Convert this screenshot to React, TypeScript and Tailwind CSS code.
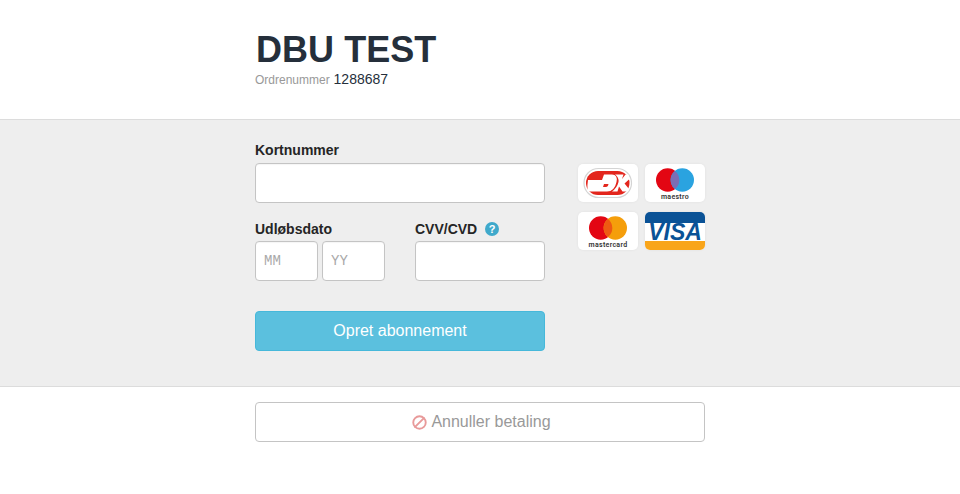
import React from 'react';
import { Ban } from 'lucide-react';

const fieldClass =
  'block h-10 border border-[#c4c4c4] rounded-[4px] bg-white outline-none shadow-[inset_0_1px_1px_rgba(0,0,0,0.04)]';

const CardBox: React.FC<{ children: React.ReactNode }> = ({ children }) => (
  <div className="w-[60px] h-[38px] bg-white rounded-[5px] overflow-hidden shadow-[0_0_3px_rgba(0,0,0,0.06)] flex flex-col items-center">
    {children}
  </div>
);

const DkLogo = () => (
  <CardBox>
    <svg width="60" height="38" viewBox="0 0 60 38">
      <rect x="6" y="4.500" width="47.500" height="29" rx="14.500" fill="#fff" stroke="#d4d4d4" strokeWidth="1.200" />
      <rect x="8" y="7" width="43.500" height="24" rx="12" fill="#e3261d" />
      <path
        fillRule="evenodd"
        d="M10 16H24L26 10.500H34Q40 10.500 38.500 18Q36.500 27.500 29 27.500H9.500Q9 21 10 16ZM26 20L25 23H28Q30 23 30.500 20Z"
        fill="#fff"
      />
      <path d="M37 10.500H45.500L44 15L47.500 10.500H50.500L51.500 15L46.500 19.500L51 25L50 27.500H44.500L41 22.500L39.500 27.500H34Q39 24 40.500 18Q41 13 37 10.500Z" fill="#fff" />
    </svg>
  </CardBox>
);

const MaestroLogo = () => (
  <CardBox>
    <svg width="60" height="26" viewBox="0 0 60 26" className="mt-[4px] shrink-0">
      <circle cx="22.700" cy="12" r="11.700" fill="#e30613" />
      <circle cx="37.300" cy="12" r="11.700" fill="#2aa3e0" />
      <path d="M30 2.900a11.700 11.700 0 0 1 0 18.200a11.700 11.700 0 0 1 0-18.200z" fill="#7b6db5" />
    </svg>
    <span className="text-[7px] leading-[6px] font-semibold text-[#333] font-['Roboto',sans-serif] tracking-[0.3px]">maestro</span>
  </CardBox>
);

const MastercardLogo = () => (
  <CardBox>
    <svg width="60" height="26" viewBox="0 0 60 26" className="mt-[4px] shrink-0">
      <circle cx="22.700" cy="12" r="11.700" fill="#e30613" />
      <circle cx="37.300" cy="12" r="11.700" fill="#f59e0b" />
      <path d="M30 2.900a11.700 11.700 0 0 1 0 18.200a11.700 11.700 0 0 1 0-18.200z" fill="#ee5a12" />
    </svg>
    <span className="text-[7px] leading-[6px] font-semibold text-[#333] font-['Roboto',sans-serif] tracking-[0.3px]">mastercard</span>
  </CardBox>
);

const VisaLogo = () => (
  <CardBox>
    <div className="w-full h-[11px] bg-[#0a5296] shrink-0" />
    <div className="h-[18px] shrink-0 w-full bg-white flex items-center justify-center">
      <span className="text-[23px] leading-[18px] font-bold italic text-[#0a5296] font-['Liberation_Sans',sans-serif]">
        VISA
      </span>
    </div>
    <div className="w-full h-[9px] bg-[#f9a51a] shrink-0" />
  </CardBox>
);

export default function App() {
  return (
    <div className="min-h-[494px] bg-white font-['Liberation_Sans',Arial,sans-serif]">
      {/* Header */}
      <div className="h-[120px] border-b border-[#dcdcdc]">
        <div className="w-[450px] mx-auto pt-[30px]">
          <h1 className="text-[36px] leading-[40px] font-bold tracking-[0.05px] pl-[1px] text-[#252f3b]">DBU TEST</h1>
          <p className="-mt-[1px] leading-[20px] text-[14px] text-[#252f3b]">
            <span className="text-[12px] text-[#999999]">Ordrenummer</span> 1288687
          </p>
        </div>
      </div>

      {/* Form */}
      <div className="h-[267px] bg-[#eeeeee] border-b border-[#dcdcdc]">
        <div className="w-[450px] mx-auto flex pt-[20px]">
          <div className="w-[290px]">
            <label className="block text-[14px] leading-[20px] font-bold text-[#252525] mb-[3px]">Kortnummer</label>
            <input type="text" className={`${fieldClass} w-full`} />

            <div className="flex mt-[16px]">
              <div className="w-[160px]">
                <label className="block text-[14px] leading-[20px] font-bold text-[#252525] mb-[2px]">Udløbsdato</label>
                <div className="flex gap-[4px]">
                  <input
                    type="text"
                    placeholder="MM"
                    className={`${fieldClass} w-[63px] px-[8px] text-[14px] font-['Liberation_Mono',monospace] placeholder:text-[#a9a9a9]`}
                  />
                  <input
                    type="text"
                    placeholder="YY"
                    className={`${fieldClass} w-[63px] px-[8px] text-[14px] font-['Liberation_Mono',monospace] placeholder:text-[#a9a9a9]`}
                  />
                </div>
              </div>
              <div className="w-[130px]">
                <label className="flex items-center gap-[8px] text-[14px] leading-[20px] font-bold text-[#252525] mb-[2px]">
                  CVV/CVD
                  <span className="w-[14px] h-[14px] rounded-full bg-[#3fa9cb] text-white text-[11px] leading-[14px] text-center font-bold">
                    ?
                  </span>
                </label>
                <input type="text" className={`${fieldClass} w-full`} />
              </div>
            </div>

            <button
              type="button"
              className="mt-[30px] w-full h-10 rounded-[4px] bg-[#5bc0de] border border-[#46b8da] text-white text-[16px]"
            >
              Opret abonnement
            </button>
          </div>

          <div className="ml-[33px] mt-[24px] grid grid-cols-[60px_60px] gap-x-[7px] gap-y-[10px] h-fit">
            <DkLogo />
            <MaestroLogo />
            <MastercardLogo />
            <VisaLogo />
          </div>
        </div>
      </div>

      {/* Cancel */}
      <div className="w-[450px] mx-auto pt-[15px]">
        <button
          type="button"
          className="w-full h-10 pl-[3px] rounded-[4px] border border-[#c4c4c4] bg-white text-[#999999] text-[16px] flex items-center justify-center gap-[4px]"
        >
          <Ban size={15} strokeWidth={3} className="text-[#e89a9a] -scale-x-100" />
          Annuller betaling
        </button>
      </div>
    </div>
  );
}
